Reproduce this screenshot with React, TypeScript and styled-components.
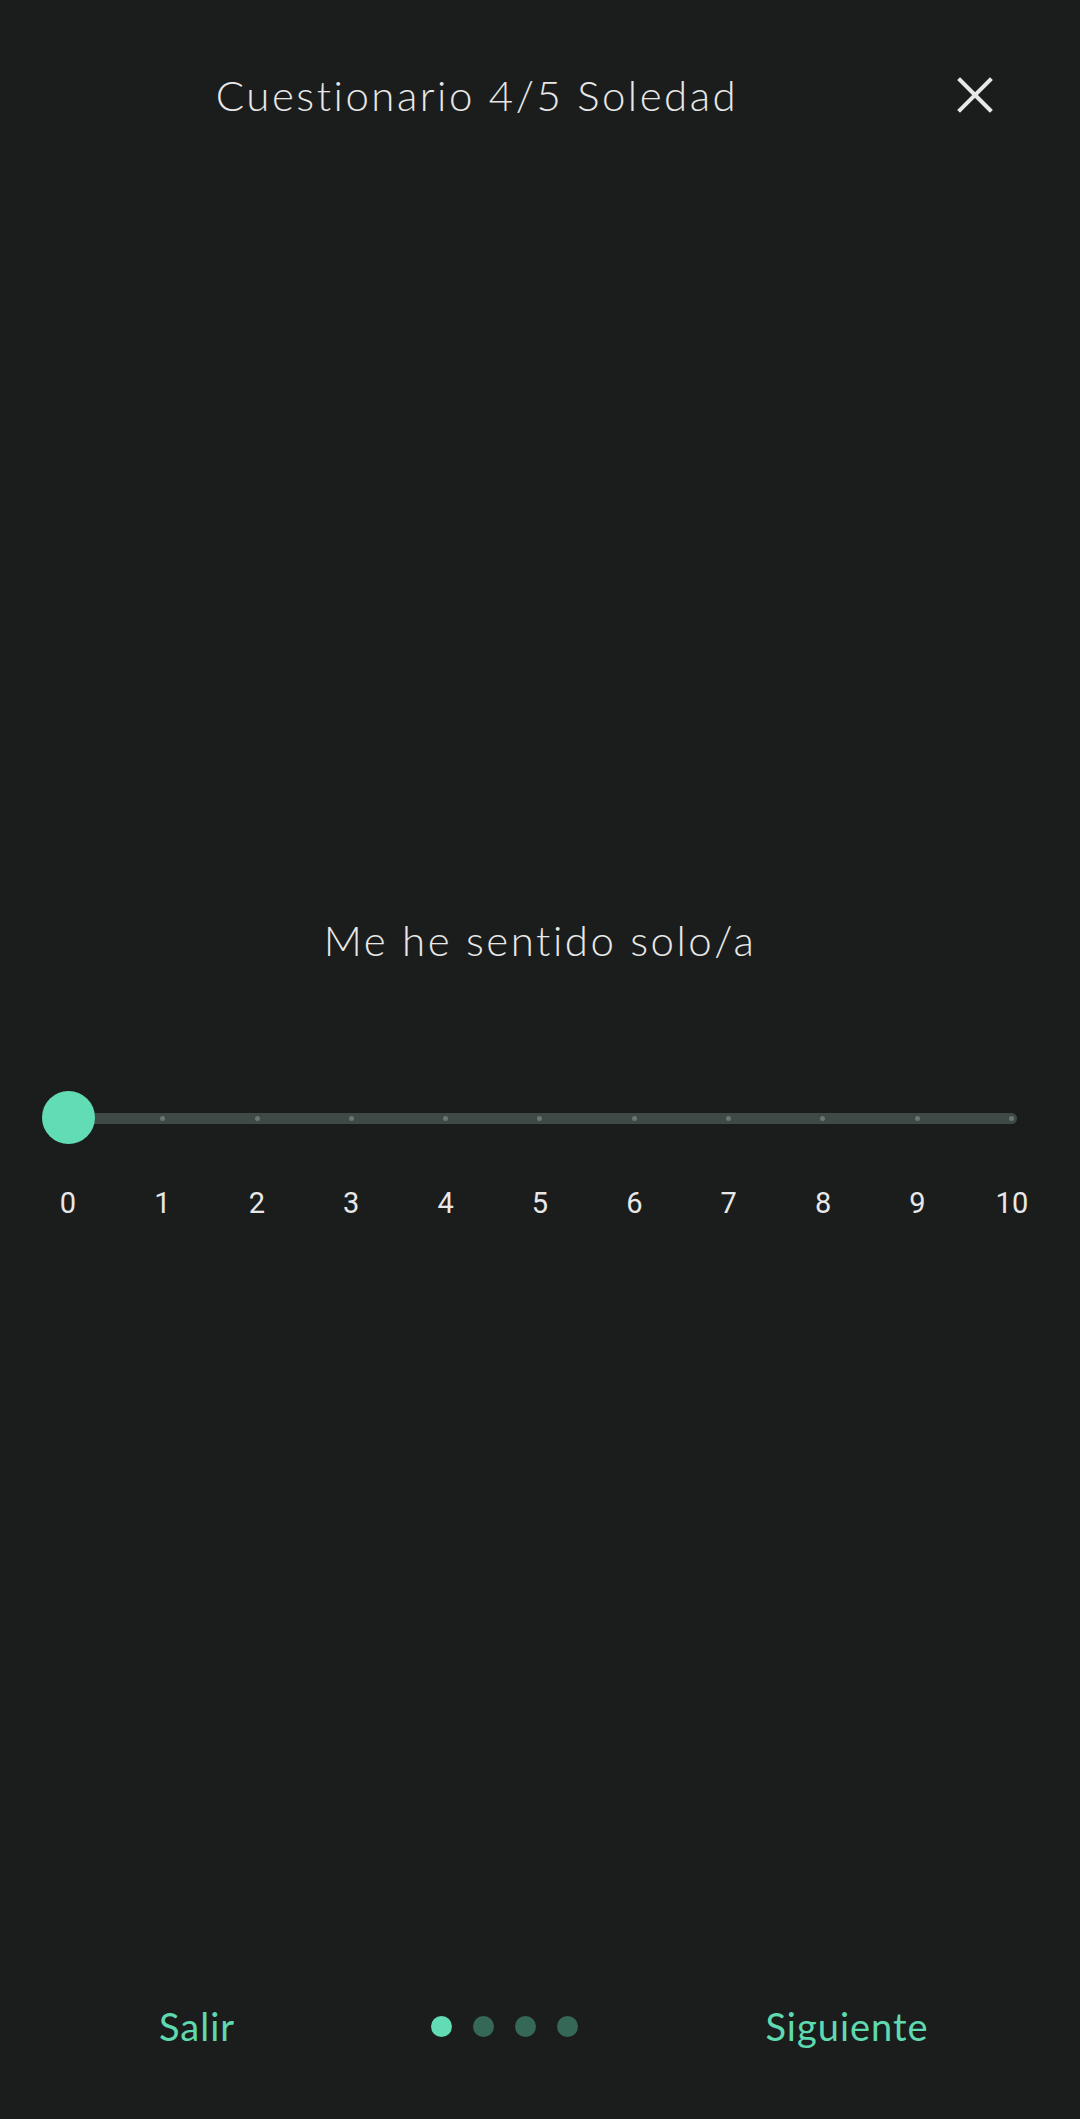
import styled, { createGlobalStyle } from "styled-components";

const GlobalStyle = createGlobalStyle`
  html, body {
    margin: 0;
    padding: 0;
    background: #1b1d1c;
  }
  * {
    box-sizing: border-box;
  }
`;

const Page = styled.div`
  min-height: 2119px;
  display: flex;
  flex-direction: column;
  background: #1b1d1c;
  color: #e8e8e8;
  font-family: "Lato", "Noto Sans", sans-serif;
`;

const Header = styled.header`
  height: 190px;
  display: grid;
  grid-template-columns: 954px 42px;
  align-items: center;
`;

const Title = styled.h1`
  margin: 0;
  text-align: center;
  font-size: 42px;
  font-weight: 300;
  letter-spacing: 2.5px;
  color: #e8e8e8;
`;

const CloseButton = styled.button`
  width: 42px;
  height: 42px;
  padding: 0;
  border: none;
  background: none;
  display: flex;
  align-items: center;
  justify-content: center;
  cursor: pointer;
`;

const Main = styled.main`
  flex: 1;
  display: flex;
  flex-direction: column;
`;

const Question = styled.p`
  margin: 720px 0 0;
  height: 60px;
  line-height: 60px;
  text-align: center;
  font-size: 42px;
  font-weight: 300;
  letter-spacing: 2.5px;
  color: #e8e8e8;
`;

const Scale = styled.div`
  margin: 118px 0 0 38px;
  width: 1004px;
`;

const SliderRow = styled.div`
  position: relative;
  height: 60px;
  display: flex;
  align-items: center;
`;

const Track = styled.div`
  flex: 1;
  margin: 0 25px;
  height: 11px;
  border-radius: 6px;
  background: #3f4945;
  display: flex;
  align-items: center;
  justify-content: space-between;
  padding: 0 3px;
`;

const Tick = styled.span`
  width: 5px;
  height: 5px;
  border-radius: 50%;
  background: #6b7571;
`;

const Thumb = styled.div<{ $value: number }>`
  position: absolute;
  top: 3px;
  left: ${(p) => 3.5 + p.$value * 94.25}px;
  width: 53px;
  height: 53px;
  border-radius: 50%;
  background: #62dcb4;
`;

const Labels = styled.div`
  margin-top: 35px;
  display: flex;
  justify-content: space-between;
`;

const Label = styled.span`
  width: 60px;
  text-align: center;
  font-family: "Roboto", sans-serif;
  font-size: 29px;
  line-height: 40px;
  color: #e8e8e8;
`;

const Footer = styled.footer`
  height: 100px;
  margin-bottom: 43px;
  display: grid;
  grid-template-columns: 394px 220px 1fr;
  align-items: center;
`;

const TextButton = styled.button`
  border: none;
  background: none;
  padding: 0;
  font-family: "Lato", "Noto Sans", sans-serif;
  font-size: 38px;
  font-weight: 400;
  letter-spacing: 1px;
  color: #5fd9af;
  text-align: center;
  cursor: pointer;
`;

const Dots = styled.div`
  display: flex;
  justify-content: center;
  gap: 21px;
`;

const Dot = styled.span<{ $active?: boolean }>`
  width: 21px;
  height: 21px;
  border-radius: 50%;
  background: ${(p) => (p.$active ? "#62dcb4" : "#356856")};
`;

const values = [0, 1, 2, 3, 4, 5, 6, 7, 8, 9, 10];

export default function App() {
  const value = 0;
  return (
    <Page>
      <GlobalStyle />
      <Header>
        <Title>Cuestionario 4/5 Soledad</Title>
        <CloseButton aria-label="Cerrar">
          <svg width="36" height="36" viewBox="0 0 36 36">
            <path
              d="M3 3 L33 33 M33 3 L3 33"
              stroke="#e8e8e8"
              strokeWidth="4"
              strokeLinecap="square"
            />
          </svg>
        </CloseButton>
      </Header>
      <Main>
        <Question>Me he sentido solo/a</Question>
        <Scale>
          <SliderRow>
            <Track>
              {values.map((v) => (
                <Tick key={v} />
              ))}
            </Track>
            <Thumb $value={value} />
          </SliderRow>
          <Labels>
            {values.map((v) => (
              <Label key={v}>{v}</Label>
            ))}
          </Labels>
        </Scale>
      </Main>
      <Footer>
        <TextButton>Salir</TextButton>
        <Dots>
          <Dot $active />
          <Dot />
          <Dot />
          <Dot />
        </Dots>
        <TextButton>Siguiente</TextButton>
      </Footer>
    </Page>
  );
}
